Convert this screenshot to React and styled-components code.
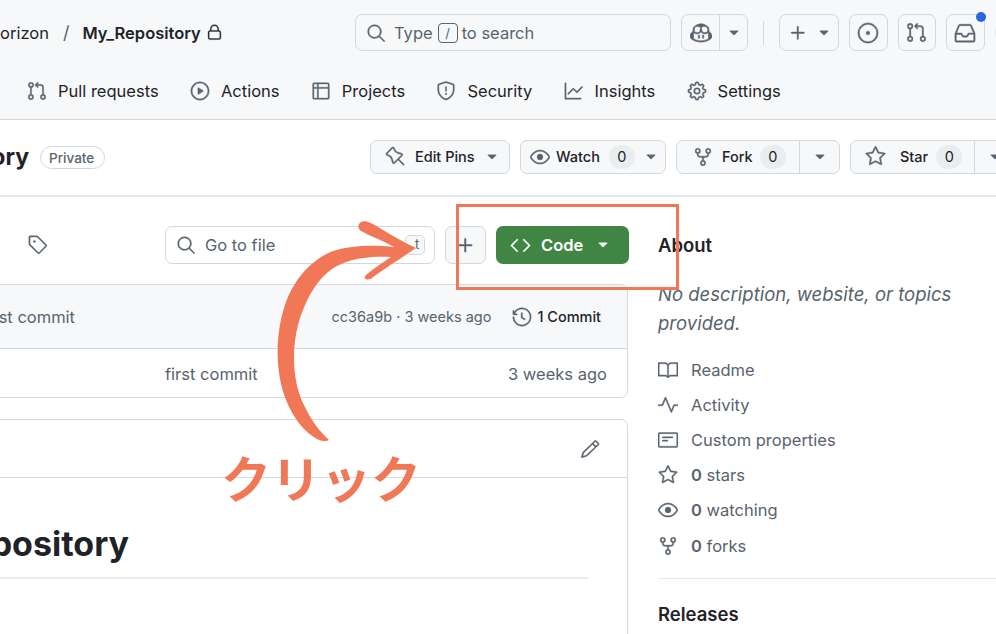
import React from "react";
import styled, { createGlobalStyle } from "styled-components";
import {
  GoBook,
  GoCode,
  GoCopilot,
  GoEye,
  GoGear,
  GoGitPullRequest,
  GoGraph,
  GoHistory,
  GoInbox,
  GoIssueOpened,
  GoLock,
  GoNote,
  GoPencil,
  GoPin,
  GoPlay,
  GoPlus,
  GoPulse,
  GoRepoForked,
  GoSearch,
  GoShield,
  GoStar,
  GoTable,
  GoTag,
  GoTriangleDown
} from "react-icons/go";

const ink = "#1f2328";
const muted = "#59636e";
const line = "#d1d9e0";
const soft = "#f6f8fa";
const coral = "#f07857";

const GlobalStyle = createGlobalStyle`
  html, body {
    margin: 0;
    background: #fff;
  }
  body {
    font-family: Inter, "Liberation Sans", sans-serif;
    color: ${ink};
  }
  svg {
    stroke-width: 0.5px;
  }
`;

const Page = styled.div`
  position: relative;
  width: 996px;
  height: 634px;
  overflow: hidden;
`;

const Header = styled.header`
  background: ${soft};
  border-bottom: 1px solid ${line};
  height: 119px;
`;

const TopBar = styled.div`
  display: flex;
  align-items: center;
  height: 37px;
  padding-top: 14px;
  width: 1040px;
`;

const Crumbs = styled.div`
  display: flex;
  align-items: center;
  width: 355px;
  font-size: 16.5px;
  white-space: nowrap;
`;

const Slash = styled.span`
  margin: 0 13px 0 14px;
  color: ${muted};
  font-size: 18px;
`;

const RepoName = styled.strong`
  font-weight: 600;
  margin-right: 5px;
`;

const SearchBox = styled.div`
  display: flex;
  align-items: center;
  box-sizing: border-box;
  width: 316px;
  height: 37px;
  padding-left: 10px;
  margin-right: 10px;
  border: 1px solid ${line};
  border-radius: 7px;
  color: ${muted};
  font-size: 16.5px;
  gap: 8px;
`;

const SearchHint = styled.span`
  display: flex;
  align-items: center;
`;

const Kbd = styled.span`
  display: flex;
  align-items: center;
  justify-content: center;
  box-sizing: border-box;
  width: 20px;
  height: 20px;
  margin: 0 4px 0 5px;
  border: 1px solid ${muted};
  border-radius: 4px;
  font-size: 13px;
`;

const IconBtn = styled.div`
  display: flex;
  align-items: center;
  justify-content: center;
  position: relative;
  box-sizing: border-box;
  flex: none;
  width: ${(p) => p.$w || 38.5}px;
  height: 37px;
  margin-right: 10px;
  gap: 7px;
  border: 1px solid ${line};
  border-radius: 7px;
  color: ${muted};
`;

const SplitBtn = styled.div`
  display: flex;
  box-sizing: border-box;
  width: 67px;
  height: 37px;
  border: 1px solid ${line};
  border-radius: 7px;
  color: ${muted};
`;

const SplitCell = styled.div`
  display: flex;
  align-items: center;
  justify-content: center;
  flex: ${(p) => p.$grow || 1};
  & + & {
    border-left: 1px solid ${line};
  }
`;

const Divider = styled.div`
  width: 1px;
  height: 24px;
  margin: 0 15px;
  background: ${line};
`;

const Dot = styled.span`
  position: absolute;
  top: -3px;
  right: -2px;
  width: 10px;
  height: 10px;
  border-radius: 50%;
  background: #2a66dc;
`;

const Avatar = styled.div`
  flex: none;
  width: 39px;
  height: 37px;
  border-radius: 50%;
  background: #e6eaef;
`;

const Nav = styled.nav`
  display: flex;
  align-items: center;
  box-sizing: border-box;
  height: 68px;
  padding: 12px 0 0 27px;
`;

const NavItem = styled.div`
  display: flex;
  align-items: center;
  gap: 11px;
  margin-right: 31.3px;
  font-size: 16.5px;
  white-space: nowrap;
  svg {
    color: ${muted};
  }
`;

const TitleRow = styled.div`
  display: flex;
  align-items: center;
  box-sizing: border-box;
  width: 1040px;
  height: 77px;
  padding-bottom: 2px;
  border-bottom: 2px solid #e4e8ec;
`;

const Clipped = styled.div`
  display: flex;
  justify-content: flex-end;
  overflow: hidden;
  flex: none;
  white-space: nowrap;
  width: ${(p) => p.$w}px;
`;

const RepoTitle = styled.span`
  font-size: 23px;
  font-weight: 700;
`;

const PrivateBadge = styled.span`
  display: flex;
  align-items: center;
  box-sizing: border-box;
  height: 23px;
  padding: 0 8px;
  margin: 2px 265px 0 11px;
  width: 65px;
  border: 1px solid ${line};
  border-radius: 12px;
  color: ${muted};
  font-size: 13.5px;
  font-weight: 500;
`;

const ActionBtn = styled.div`
  display: flex;
  align-items: center;
  box-sizing: border-box;
  flex: none;
  width: ${(p) => p.$w}px;
  height: 34px;
  margin-right: 10px;
  background: ${soft};
  border: 1px solid ${line};
  border-radius: 7px;
  font-size: 14.5px;
  font-weight: 500;
  svg {
    color: ${muted};
  }
`;

const ActionLabel = styled.div`
  display: flex;
  align-items: center;
  flex: 1;
  height: 100%;
  padding-left: ${(p) => p.$pad || 14}px;
  gap: ${(p) => p.$gap || 10}px;
`;

const ActionCaret = styled.div`
  display: flex;
  align-items: center;
  justify-content: center;
  flex: none;
  width: 39px;
  height: 100%;
  border-left: 1px solid ${line};
`;

const Count = styled.span`
  display: inline-flex;
  align-items: center;
  justify-content: center;
  width: 26px;
  height: 24px;
  margin-left: ${(p) => p.$ml || 0}px;
  margin-right: ${(p) => p.$mr || 0}px;
  border-radius: 12px;
  background: #eaedf0;
  font-size: 14.5px;
  font-weight: 400;
  color: ${ink};
`;

const Body = styled.div`
  display: grid;
  grid-template-columns: 628px 1fr;
  column-gap: 30px;
`;

const Main = styled.main`
  padding-top: 29px;
`;

const Toolbar = styled.div`
  display: flex;
  align-items: center;
  height: 38px;
  margin-bottom: 20px;
  & > * {
    flex: none;
  }
`;

const TagSlot = styled.div`
  display: flex;
  width: 165px;
  padding-left: 28px;
  box-sizing: border-box;
  color: ${muted};
`;

const FileSearch = styled.div`
  display: flex;
  align-items: center;
  position: relative;
  box-sizing: border-box;
  width: 270px;
  height: 38px;
  padding-left: 10px;
  gap: 9px;
  margin-right: 10px;
  border: 1px solid ${line};
  border-radius: 7px;
  color: ${muted};
  font-size: 16.5px;
`;

const ShortKey = styled.span`
  position: absolute;
  right: 9px;
  top: 8px;
  width: 20px;
  height: 20px;
  box-sizing: border-box;
  padding-left: 9px;
  background: ${soft};
  border: 1px solid ${line};
  border-radius: 5px;
  font-size: 13px;
`;

const AddBtn = styled.div`
  display: flex;
  align-items: center;
  justify-content: center;
  box-sizing: border-box;
  width: 41px;
  height: 38px;
  margin-right: 10px;
  background: ${soft};
  border: 1px solid ${line};
  border-radius: 7px;
  color: ${muted};
`;

const CodeBtn = styled.div`
  display: flex;
  align-items: center;
  box-sizing: border-box;
  width: 133px;
  height: 38px;
  padding-left: 14px;
  background: #408544;
  border-radius: 7px;
  color: #fff;
  font-size: 16.5px;
  font-weight: 600;
`;

const CodeLabel = styled.span`
  margin: 0 12px 0 10px;
`;

const Panel = styled.section`
  box-sizing: border-box;
  margin-left: -10px;
  border: 1px solid ${line};
  border-radius: 7px;
  overflow: hidden;
`;

const CommitHead = styled.div`
  display: flex;
  align-items: center;
  height: 63px;
  padding-right: 26px;
  background: ${soft};
  border-bottom: 1px solid ${line};
  font-size: 14.5px;
`;

const CommitMsg = styled.span`
  flex: 1;
  color: ${muted};
  font-size: 16.5px;
`;

const CommitMeta = styled.span`
  color: ${muted};
  margin-right: 21px;
`;

const CommitCount = styled.span`
  display: flex;
  align-items: center;
  gap: 5px;
  font-weight: 500;
  svg {
    color: ${muted};
  }
`;

const FileRow = styled.div`
  display: flex;
  align-items: center;
  justify-content: space-between;
  height: 46px;
  padding: 2px 20px 0 174px;
  color: ${muted};
  font-size: 16.5px;
`;

const Readme = styled(Panel)`
  margin-top: 21px;
  height: 300px;
`;

const ReadmeHead = styled.div`
  display: flex;
  align-items: center;
  justify-content: flex-end;
  box-sizing: border-box;
  height: 58px;
  padding-right: 27px;
  border-bottom: 1px solid ${line};
  color: ${muted};
`;

const ReadmeTitle = styled.div`
  box-sizing: border-box;
  width: 597px;
  height: 101px;
  padding-top: 45px;
  border-bottom: 2px solid #e7ebef;
`;

const Heading = styled.h1`
  margin: 0;
  font-size: 34px;
  line-height: 42px;
  font-weight: 700;
`;

const Side = styled.aside`
  padding-top: 36px;
`;

const SideTitle = styled.h2`
  margin: 0;
  font-size: 18.5px;
  line-height: 24px;
  font-weight: 600;
`;

const Description = styled.p`
  margin: 23px 0 15px;
  width: 320px;
  color: ${muted};
  font-size: 18.5px;
  font-style: italic;
  line-height: 28.5px;
`;

const SideList = styled.div`
  padding-bottom: 15px;
  border-bottom: 1px solid #e4e8ec;
  margin-bottom: 23px;
`;

const SideItem = styled.div`
  display: flex;
  align-items: center;
  gap: 13px;
  height: 35.2px;
  color: ${muted};
  font-size: 16.5px;
  b {
    font-weight: 600;
  }
`;

const Annotation = styled.div`
  position: absolute;
  left: 456px;
  top: 204px;
  box-sizing: border-box;
  width: 223px;
  height: 86px;
  border: 3px solid ${coral};
`;

const ArrowSvg = styled.svg`
  position: absolute;
  left: 0;
  top: 0;
  stroke-width: 0;
  pointer-events: none;
`;

const ClickLabel = styled.div`
  position: absolute;
  left: 221px;
  top: 440px;
  color: ${coral};
  font-family: "Noto Sans CJK JP", sans-serif;
  font-size: 50px;
  line-height: 72px;
  font-weight: 700;
  white-space: nowrap;
`;

const Caret = ({ size = 16 }) => <GoTriangleDown size={size} />;

const navItems = [
  [GoGitPullRequest, "Pull requests"],
  [GoPlay, "Actions"],
  [GoTable, "Projects"],
  [GoShield, "Security"],
  [GoGraph, "Insights"],
  [GoGear, "Settings"]
];

const sideItems = [
  [GoBook, "Readme"],
  [GoPulse, "Activity"],
  [GoNote, "Custom properties"],
  [GoStar, <><b>0</b> stars</>],
  [GoEye, <><b>0</b> watching</>],
  [GoRepoForked, <><b>0</b> forks</>]
];

export default function App() {
  return (
    <Page>
      <GlobalStyle />
      <Header>
        <TopBar>
          <Crumbs>
            <Clipped $w={49}>Horizon</Clipped>
            <Slash>/</Slash>
            <RepoName>My_Repository</RepoName>
            <GoLock size={17} />
          </Crumbs>
          <SearchBox>
            <GoSearch size={20} />
            <SearchHint>
              Type<Kbd>/</Kbd>to search
            </SearchHint>
          </SearchBox>
          <SplitBtn>
            <SplitCell $grow={39}>
              <GoCopilot size={22} />
            </SplitCell>
            <SplitCell $grow={28}>
              <Caret />
            </SplitCell>
          </SplitBtn>
          <Divider />
          <IconBtn $w={60}>
            <GoPlus size={22} />
            <Caret />
          </IconBtn>
          <IconBtn>
            <GoIssueOpened size={22} />
          </IconBtn>
          <IconBtn>
            <GoGitPullRequest size={21} />
          </IconBtn>
          <IconBtn>
            <GoInbox size={22} />
            <Dot />
          </IconBtn>
          <Avatar />
        </TopBar>
        <Nav>
          {navItems.map(([Icon, label]) => (
            <NavItem key={label}>
              <Icon size={20} />
              {label}
            </NavItem>
          ))}
        </Nav>
      </Header>

      <TitleRow>
        <Clipped $w={29}>
          <RepoTitle>My_Repository</RepoTitle>
        </Clipped>
        <PrivateBadge>Private</PrivateBadge>
        <ActionBtn $w={140}>
          <ActionLabel $gap={9}>
            <GoPin size={21} />
            Edit Pins
            <Caret />
          </ActionLabel>
        </ActionBtn>
        <ActionBtn $w={146}>
          <ActionLabel $pad={9} $gap={6}>
            <GoEye size={20} />
            Watch
            <Count $ml={3} $mr={2}>0</Count>
            <Caret />
          </ActionLabel>
        </ActionBtn>
        <ActionBtn $w={164}>
          <ActionLabel $pad={16} $gap={9}>
            <GoRepoForked size={20} />
            Fork
            <Count $ml={-2}>0</Count>
          </ActionLabel>
          <ActionCaret>
            <Caret />
          </ActionCaret>
        </ActionBtn>
        <ActionBtn $w={165}>
          <ActionLabel $pad={14} $gap={14}>
            <GoStar size={21} />
            Star
            <Count $ml={-6}>0</Count>
          </ActionLabel>
          <ActionCaret>
            <Caret />
          </ActionCaret>
        </ActionBtn>
      </TitleRow>

      <Body>
        <Main>
          <Toolbar>
            <TagSlot>
              <GoTag size={20} />
            </TagSlot>
            <FileSearch>
              <GoSearch size={20} />
              Go to file
              <ShortKey>t</ShortKey>
            </FileSearch>
            <AddBtn>
              <GoPlus size={23} />
            </AddBtn>
            <CodeBtn>
              <GoCode size={21} />
              <CodeLabel>Code</CodeLabel>
              <Caret />
            </CodeBtn>
          </Toolbar>

          <Panel>
            <CommitHead>
              <CommitMsg>
                <Clipped $w={84}>first commit</Clipped>
              </CommitMsg>
              <CommitMeta>cc36a9b · 3 weeks ago</CommitMeta>
              <CommitCount>
                <GoHistory size={20} />1 Commit
              </CommitCount>
            </CommitHead>
            <FileRow>
              <span>first commit</span>
              <span>3 weeks ago</span>
            </FileRow>
          </Panel>

          <Readme>
            <ReadmeHead>
              <GoPencil size={20} />
            </ReadmeHead>
            <ReadmeTitle>
              <Clipped $w={138}>
                <Heading>My_Repository</Heading>
              </Clipped>
            </ReadmeTitle>
          </Readme>
        </Main>

        <Side>
          <SideTitle>About</SideTitle>
          <Description>No description, website, or topics provided.</Description>
          <SideList>
            {sideItems.map(([Icon, label], i) => (
              <SideItem key={i}>
                <Icon size={20} />
                <span>{label}</span>
              </SideItem>
            ))}
          </SideList>
          <SideTitle>Releases</SideTitle>
        </Side>
      </Body>

      <Annotation />
      <ArrowSvg width="996" height="634" viewBox="0 0 996 634">
        <path
          fill={coral}
          d="M361 222 C366 220 371 223 378 227 C390 234 403 242 416 248 C405 256 385 268 372 278 C368 281 362 279 366 275 C373 269 382 263 391 257 C372 256 352 258 337 266 C318 276 305 300 298 325 C291 352 293 385 305 407 C311 420 320 432 329 440 C326 442 321 441 317 439 C303 431 293 417 286 400 C275 372 275 335 285 305 C293 281 310 260 333 251 C352 245 375 245 394 247 C382 240 370 236 361 231 C357 228 358 224 361 222 Z"
        />
      </ArrowSvg>
      <ClickLabel>クリック</ClickLabel>
    </Page>
  );
}
